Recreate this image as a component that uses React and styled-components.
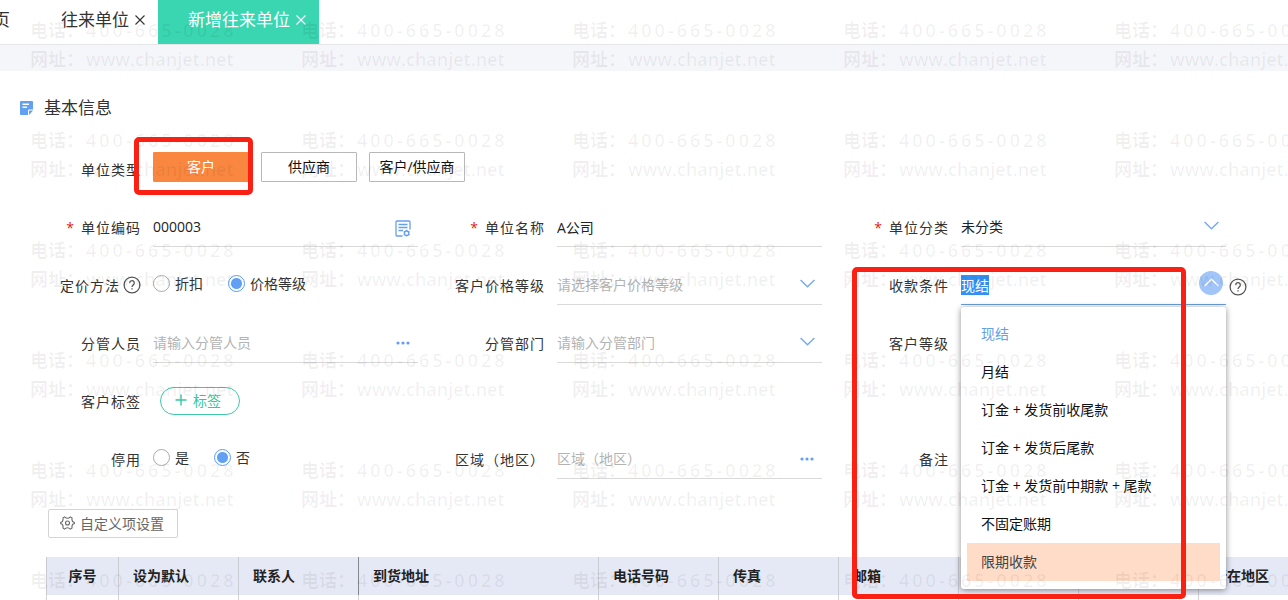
import { useId, useState } from 'react';
import styled, { createGlobalStyle, css } from 'styled-components';

const GlobalStyle = createGlobalStyle`
  * {
    box-sizing: border-box;
  }

  body {
    margin: 0;
    background: #fff;
  }

  body, button, input, select {
    font-family: "Open Sans", "Noto Sans CJK SC", sans-serif;
    font-size: 14px;
    color: #333;
  }
`;

const Page = styled.div`
  position: relative;
  height: 100vh;
  overflow: hidden;
`;

/* ---------- tabs ---------- */

const TabBar = styled.nav`
  display: flex;
  height: 45px;
  margin-left: -54px; // the list is scrolled, the home tab is mostly hidden
  border-bottom: 1px solid #e6e6e8;
`;

const Tab = styled.div`
  display: flex;
  align-items: center;
  gap: 6px;
  height: 44px;
  padding: 0 13px 5px 30px;
  color: ${(p) => (p.$active ? '#fff' : '#333')};
  background: ${(p) => (p.$active ? '#3ad6b1' : 'transparent')};
`;

const TabLink = styled.a`
  font-size: 17px;
  line-height: 24px;
  color: inherit;
  text-decoration: none;
  white-space: nowrap;
`;

const HomeTab = styled(Tab)`
  padding-right: 21px;
`;

const CloseButton = styled.button`
  display: flex;
  padding: 0;
  border: 0;
  background: none;
  color: inherit;
`;

const Band = styled.div`
  height: 26px;
  background: #f5f6fa;
`;

/* ---------- form ---------- */

const SectionTitle = styled.h2`
  display: flex;
  align-items: center;
  gap: 11px;
  margin: 25px 0 32px;
  padding-left: 20px;
  font-size: 17px;
  font-weight: 400;
  line-height: 24px;
`;

const Form = styled.form`
  padding: 0 33px 0 43px;
`;

const TypeRow = styled.div`
  display: flex;
  gap: 12px;
  height: 38px;
  margin-bottom: 21px;
`;

const FieldGrid = styled.div`
  display: grid;
  grid-template-columns: repeat(3, 1fr);
  row-gap: 22px;
`;

const Cell = styled.div`
  display: grid;
  grid-template-columns: 98px 1fr 29px;
  height: 36px;
`;

const Label = styled.label`
  display: flex;
  align-items: center;
  justify-content: flex-end;
  flex: 0 0 98px;
  padding-bottom: 4px;
  letter-spacing: 1px;
  white-space: nowrap;
`;

const Star = styled.span`
  margin-right: 6px;
  color: #e02020;
`;

const Control = styled.div`
  position: relative;
  display: flex;
  align-items: center;
  margin-left: 12px;
  padding: 0 3px ${(p) => (p.$plain ? '4px' : '0')} 0;
  border-bottom: ${(p) => (p.$plain ? '0' : `1px solid ${p.$open ? '#6a9fdd' : '#d9d9d9'}`)};
`;

const boxless = css`
  flex: 1;
  min-width: 0;
  height: 24px;
  margin-bottom: 4px;
  padding: 0;
  border: 0;
  outline: 0;
  background: none;
  color: ${(p) => (p.$muted ? '#b3b3b3' : '#222')};
`;

const TextInput = styled.input`
  ${boxless}

  &::placeholder {
    color: #b3b3b3;
    opacity: 1;
  }

  &::selection {
    color: #fff;
    background: #3390f5;
  }
`;

const Select = styled.select`
  ${boxless}
  appearance: none;
`;

const Suffix = styled.span`
  display: flex;
  align-items: center;
  justify-content: center;
  width: 24px;
  height: 24px;
  margin-bottom: 6px;
  color: #74a9f3;
  pointer-events: none;
`;

const IconButton = styled.button`
  display: flex;
  align-items: center;
  justify-content: center;
  width: 24px;
  height: 24px;
  margin-bottom: ${(p) => (p.$filled ? '8px' : p.$raised ? '4px' : '0')};
  padding: 0;
  border: 0;
  border-radius: 50%;
  color: ${(p) => (p.$filled ? '#fff' : '#659fef')};
  background: ${(p) => (p.$filled ? '#a1c5f8' : 'none')};
`;

const HelpButton = styled.button`
  display: flex;
  align-self: center;
  margin-left: 3px;
  padding: 0;
  border: 0;
  background: none;
  color: #555;
`;

const TypeButton = styled.button`
  width: 96px;
  height: 30px;
  padding: 0 0 2px;
  border: 1px solid ${(p) => (p.$active ? '#fa873f' : '#b8b8b8')};
  border-radius: 1px;
  color: ${(p) => (p.$active ? '#fff' : '#111')};
  background: ${(p) => (p.$active ? '#fa873f' : '#fff')};
`;

const Marked = styled.div`
  position: relative;
`;

const RadioGroup = styled.div`
  display: flex;
  align-items: center;
  gap: 25px;
  margin-left: 12px;
  padding-bottom: 8px;
`;

const RadioLabel = styled.label`
  display: flex;
  align-items: center;
  gap: 5px;
  white-space: nowrap;
`;

const Radio = styled.input`
  appearance: none;
  width: 17px;
  height: 17px;
  margin: 0;
  border: 1px solid #aaa;
  border-radius: 50%;
  background: #fff;

  &:checked {
    border-color: #5e9bee;
    background: radial-gradient(circle, #62a0f3 5px, #fff 6px);
  }
`;

const TagButton = styled.button`
  display: flex;
  align-items: center;
  justify-content: center;
  gap: 6px;
  width: 80px;
  height: 28px;
  margin-left: 7px;
  padding: 0 4px 2px 0;
  border: 1px solid #3fc9a7;
  border-radius: 14px;
  color: #35c7a2;
  background: #fff;
`;

const CustomButton = styled.button`
  display: flex;
  align-items: center;
  gap: 5px;
  height: 29px;
  margin: 30px 0 19px 48px;
  padding: 0 13px 2px 11px;
  border: 1px solid #d4d4d4;
  border-radius: 2px;
  color: #666;
  background: #fff;
`;

/* ---------- drop-down ---------- */

const Menu = styled.ul`
  position: absolute;
  z-index: 5;
  top: 38px;
  left: 0;
  right: 0;
  margin: 0;
  padding: 8px 6px;
  list-style: none;
  border-radius: 3px;
  background: #fff;
  box-shadow: 0 1px 6px rgba(0, 0, 0, 0.45);
`;

const Option = styled.li`
  padding: 0 14px;
  line-height: 38px;
  white-space: nowrap;
  color: ${(p) => (p.$selected ? '#659fe8' : p.$hovered ? '#444' : '#111')};
  background: ${(p) => (p.$hovered ? '#ffdcc8' : 'transparent')};
`;

/* ---------- table ---------- */

const Table = styled.table`
  width: calc(100% - 46px);
  margin-left: 46px;
  border-collapse: collapse;
  table-layout: fixed;
`;

const Th = styled.th`
  width: ${(p) => (p.$width ? `${p.$width}px` : 'auto')};
  height: 38px;
  padding: 0 0 3px ${(p) => (p.$center ? '0' : '14px')};
  border-left: 1px solid ${(p) => (p.$frozen ? '#85878f' : '#c9cbd2')};
  text-align: ${(p) => (p.$center ? 'center' : 'left')};
  white-space: nowrap;
  font-weight: 600;
  color: #222;
  background: #e5e9f5;
`;

const Td = styled.td`
  height: 38px;
  border-left: 1px solid #d4d4d8;
`;

/* ---------- overlays ---------- */

const Mark = styled.span`
  position: absolute;
  z-index: 20;
  border: 5px solid #fa2114;
  border-radius: 5px;
  pointer-events: none;
`;

const TypeMark = styled(Mark)`
  inset: -15px -4px -13px -19px;
  height: 58px;
`;

const TermsMark = styled(Mark)`
  top: -2px;
  left: -109px;
  right: 40px;
  height: 332px;
`;

const WatermarkLayer = styled.div`
  position: absolute;
  z-index: 10;
  inset: 0;
  display: grid;
  grid-template-columns: repeat(5, 271px);
  grid-auto-rows: 110px;
  padding: 16px 0 0 30px;
  overflow: hidden;
  pointer-events: none;
  font-size: 18px;
  font-weight: 600;
  line-height: 29px;
  white-space: nowrap;
  color: rgba(0, 0, 0, 0.06);
`;

const WatermarkLine = styled.div`
  display: flex;
  gap: 2px;
`;

const Phone = styled.span`
  letter-spacing: 3px;
`;

/* ---------- icons ---------- */

const CloseIcon = () => (
  <svg width="10" height="10" viewBox="0 0 10 10" fill="none" stroke="currentColor" strokeWidth="1.1">
    <path d="M0.5 0.5l9 9M9.5 0.5l-9 9" />
  </svg>
);

const SectionIcon = () => (
  <svg width="13" height="14" viewBox="0 0 13 14">
    <path d="M1 0h11a1 1 0 0 1 1 1v7.5H9.2a1.2 1.2 0 0 0-1.2 1.2V14H1a1 1 0 0 1-1-1V1a1 1 0 0 1 1-1z" fill="#62a0f1" />
    <path d="M9 14V10.2a.7.7 0 0 1 .7-.7H13z" fill="#62a0f1" />
    <path d="M2.5 3.2h6.5M2.5 6.2h4.5" stroke="#fff" strokeWidth="1.4" />
  </svg>
);

const Chevron = ({ up }) => (
  <svg width="15" height="9" viewBox="0 0 15 9" fill="none" stroke="currentColor" strokeWidth="1.4">
    <path d={up ? 'M0.6 8l6.9-6.8L14.4 8' : 'M0.6 1l6.9 6.8L14.4 1'} />
  </svg>
);

const DotsIcon = () => (
  <svg width="14" height="4" viewBox="0 0 14 4" fill="currentColor">
    <circle cx="2" cy="2" r="1.6" />
    <circle cx="7" cy="2" r="1.6" />
    <circle cx="12" cy="2" r="1.6" />
  </svg>
);

const CodeIcon = () => (
  <svg width="16" height="17" viewBox="0 0 16 17" fill="none" stroke="currentColor" strokeWidth="1.3">
    <path d="M7.5 16H2a1 1 0 0 1-1-1V2a1 1 0 0 1 1-1h12a1 1 0 0 1 1 1v7.5" />
    <path d="M3.5 4.5h9M3.5 7.5h9M3.5 10.5h4.5" />
    <circle cx="11.6" cy="13.2" r="2.2" />
    <path d="M11.6 9.8v1.2M11.6 15.4v1.2M8.7 11.5l1 .6M13.5 14.3l1 .6M8.7 14.9l1-.6M13.5 12.1l1-.6" />
  </svg>
);

// cog with its six teeth at the sides, not at the top
const CogIcon = () => (
  <svg width="15" height="14" viewBox="0 0 15 14" fill="none" stroke="currentColor" strokeWidth="1.1" strokeLinejoin="round">
    <path d="M4.6 .9Q6 2.3 7.5 2.3T10.4 .9L12 1.9Q11.7 3.9 12.4 5.1T14.3 6.2V7.8Q13.1 7.7 12.4 8.9T12 12.1L10.4 13.1Q9 11.7 7.5 11.7T4.6 13.1L3 12.1Q3.3 10.1 2.6 8.9T.7 7.8V6.2Q1.9 6.3 2.6 5.1T3 1.9Z" />
    <circle cx="7.5" cy="7" r="2" />
  </svg>
);

const HelpIcon = () => (
  <svg width="18" height="18" viewBox="0 0 18 18" fill="none" stroke="currentColor" strokeWidth="1.3">
    <circle cx="9" cy="9" r="7.9" />
    <path d="M6.7 7.1a2.3 2.3 0 1 1 3.6 1.8c-.8.6-1.3 1-1.3 2.1" />
    <path d="M9 12.2v1.4" />
  </svg>
);

const PlusIcon = () => (
  <svg width="12" height="12" viewBox="0 0 12 12" stroke="currentColor" strokeWidth="1.4">
    <path d="M6 0.5v11M0.5 6h11" />
  </svg>
);

/* ---------- pieces ---------- */

function Help() {
  return (
    <HelpButton type="button" aria-label="?">
      <HelpIcon />
    </HelpButton>
  );
}

function FieldLabel({ text, htmlFor, required }) {
  return (
    <Label htmlFor={htmlFor}>
      {required && <Star>*</Star>}
      {text}
    </Label>
  );
}

function TextField({ label, required, value, placeholder, icon, raised }) {
  const id = useId();
  return (
    <Cell>
      <FieldLabel text={label} htmlFor={id} required={required} />
      <Control>
        <TextInput id={id} defaultValue={value} placeholder={placeholder} />
        {icon && (
          <IconButton type="button" aria-label={label} $raised={raised}>
            {icon}
          </IconButton>
        )}
      </Control>
    </Cell>
  );
}

function SelectField({ label, required, value, muted }) {
  const id = useId();
  return (
    <Cell>
      <FieldLabel text={label} htmlFor={id} required={required} />
      <Control>
        <Select id={id} $muted={muted}>
          <option>{value}</option>
        </Select>
        <Suffix>
          <Chevron />
        </Suffix>
      </Control>
    </Cell>
  );
}

function RadioField({ label, name, options, help }) {
  const [value, setValue] = useState(options[1]);
  return (
    <Cell>
      <Label as="div" id={name}>
        {label}
        {help && <Help />}
      </Label>
      <RadioGroup role="radiogroup" aria-labelledby={name}>
        {options.map((option) => (
          <RadioLabel key={option}>
            <Radio type="radio" name={name} checked={value === option} onChange={() => setValue(option)} />
            {option}
          </RadioLabel>
        ))}
      </RadioGroup>
    </Cell>
  );
}

const terms = [
  '现结',
  '月结',
  '订金 + 发货前收尾款',
  '订金 + 发货后尾款',
  '订金 + 发货前中期款 + 尾款',
  '不固定账期',
  '限期收款',
];

function TermsField() {
  const [open, setOpen] = useState(true);
  const [value, setValue] = useState('现结');
  const [hovered, setHovered] = useState('限期收款');

  const choose = (term) => {
    setValue(term);
    setOpen(false);
  };

  return (
    <Cell>
      <FieldLabel text="收款条件" htmlFor="terms" />
      <Control $open={open}>
        <TextInput
          id="terms"
          role="combobox"
          aria-expanded={open}
          aria-controls="terms-list"
          value={value}
          onChange={(e) => setValue(e.target.value)}
          onFocus={(e) => e.target.select()}
          autoFocus
        />
        <IconButton type="button" aria-label="收款条件" $filled={open} $raised onClick={() => setOpen(!open)}>
          <Chevron up={open} />
        </IconButton>
        {open && (
          <Menu id="terms-list" role="listbox">
            {terms.map((term) => (
              <Option
                key={term}
                role="option"
                aria-selected={term === value}
                $selected={term === value}
                $hovered={term === hovered}
                onMouseEnter={() => setHovered(term)}
                onClick={() => choose(term)}
              >
                {term}
              </Option>
            ))}
          </Menu>
        )}
        <TermsMark />
      </Control>
      <Help />
    </Cell>
  );
}

const columns = [
  { title: '序号', width: 72, center: true },
  { title: '设为默认', width: 120 },
  { title: '联系人', width: 120 },
  { title: '到货地址', width: 240, frozen: true },
  { title: '电话号码', width: 120 },
  { title: '传真', width: 120 },
  { title: '邮箱', width: 120 },
  { title: '', width: 120 },
  { title: '', width: 120 },
  { title: '所在地区' },
];

function ContactTable() {
  return (
    <Table>
      <thead>
        <tr>
          {columns.map((c, i) => (
            <Th key={i} $width={c.width} $center={c.center} $frozen={c.frozen}>
              {c.title}
            </Th>
          ))}
        </tr>
      </thead>
      <tbody>
        <tr>
          {columns.map((c, i) => (
            <Td key={i} />
          ))}
        </tr>
      </tbody>
    </Table>
  );
}

function Watermark() {
  return (
    <WatermarkLayer aria-hidden="true">
      {Array.from({ length: 30 }, (_, i) => (
        <div key={i}>
          <WatermarkLine>
            <span>电话：</span>
            <Phone>400-665-0028</Phone>
          </WatermarkLine>
          <WatermarkLine>
            <span>网址：</span>
            <span>www.chanjet.net</span>
          </WatermarkLine>
        </div>
      ))}
    </WatermarkLayer>
  );
}

function App() {
  return (
    <Page>
      <GlobalStyle />
      <TabBar>
        <HomeTab>
          <TabLink href="#home">首页</TabLink>
        </HomeTab>
        <Tab>
          <TabLink href="#partners">往来单位</TabLink>
          <CloseButton type="button" aria-label="×">
            <CloseIcon />
          </CloseButton>
        </Tab>
        <Tab $active>
          <TabLink href="#new-partner">新增往来单位</TabLink>
          <CloseButton type="button" aria-label="×">
            <CloseIcon />
          </CloseButton>
        </Tab>
      </TabBar>
      <Band />

      <SectionTitle>
        <SectionIcon />
        基本信息
      </SectionTitle>

      <Form>
        <TypeRow>
          <Label as="div">单位类型</Label>
          <Marked>
            <TypeButton type="button" $active>客户</TypeButton>
            <TypeMark />
          </Marked>
          <TypeButton type="button">供应商</TypeButton>
          <TypeButton type="button">客户/供应商</TypeButton>
        </TypeRow>

        <FieldGrid>
          <TextField label="单位编码" required value="000003" icon={<CodeIcon />} />
          <TextField label="单位名称" required value="A公司" />
          <SelectField label="单位分类" required value="未分类" />

          <RadioField label="定价方法" name="pricing" options={['折扣', '价格等级']} help />
          <SelectField label="客户价格等级" value="请选择客户价格等级" muted />
          <TermsField />

          <TextField label="分管人员" placeholder="请输入分管人员" icon={<DotsIcon />} raised />
          <SelectField label="分管部门" value="请输入分管部门" muted />
          <TextField label="客户等级" />

          <Cell>
            <Label as="div">客户标签</Label>
            <Control $plain>
              <TagButton type="button">
                <PlusIcon />
                标签
              </TagButton>
            </Control>
          </Cell>
          <div />
          <div />

          <RadioField label="停用" name="disabled" options={['是', '否']} />
          <TextField label="区域（地区）" placeholder="区域（地区）" icon={<DotsIcon />} raised />
          <TextField label="备注" />
        </FieldGrid>
      </Form>

      <CustomButton type="button">
        <CogIcon />
        自定义项设置
      </CustomButton>

      <ContactTable />
      <Watermark />
    </Page>
  );
}

export default App;
